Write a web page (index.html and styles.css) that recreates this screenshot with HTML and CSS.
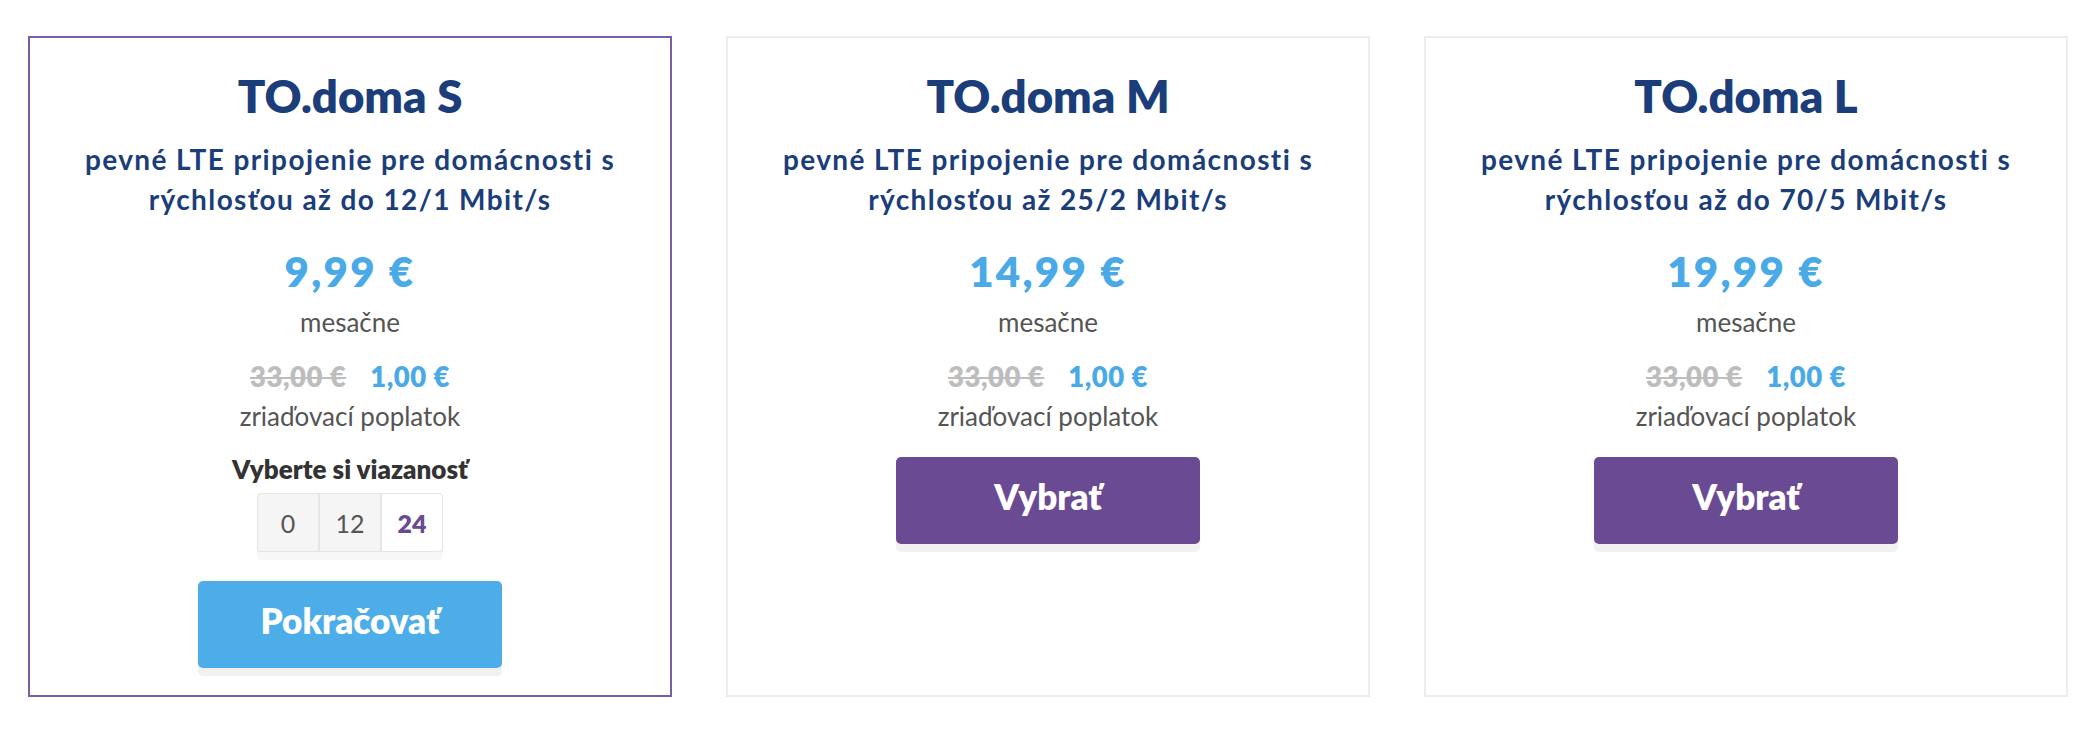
FILE: index.html
```html
<!DOCTYPE html>
<html lang="sk">
<head>
<meta charset="utf-8">
<title>TO.doma</title>
<link rel="stylesheet" href="styles.css">
</head>
<body>
<div class="plans">
  <div class="card card--active">
    <h2 class="title">TO.doma S</h2>
    <p class="subtitle">pevné LTE pripojenie pre domácnosti s<br>rýchlosťou až do 12/1 Mbit/s</p>
    <div class="price">9,99 €</div>
    <div class="label">mesačne</div>
    <div class="fee"><span class="old">33,00 €</span><span class="new">1,00 €</span></div>
    <div class="label">zriaďovací poplatok</div>
    <div class="commit-title">Vyberte si viazanosť</div>
    <div class="segments">
      <span class="seg">0</span>
      <span class="seg">12</span>
      <span class="seg seg--on">24</span>
    </div>
    <button class="btn btn--blue btn--continue">Pokračovať</button>
  </div>
  <div class="card">
    <h2 class="title">TO.doma M</h2>
    <p class="subtitle">pevné LTE pripojenie pre domácnosti s<br>rýchlosťou až 25/2 Mbit/s</p>
    <div class="price">14,99 €</div>
    <div class="label">mesačne</div>
    <div class="fee"><span class="old">33,00 €</span><span class="new">1,00 €</span></div>
    <div class="label">zriaďovací poplatok</div>
    <button class="btn btn--purple">Vybrať</button>
  </div>
  <div class="card">
    <h2 class="title">TO.doma L</h2>
    <p class="subtitle">pevné LTE pripojenie pre domácnosti s<br>rýchlosťou až do 70/5 Mbit/s</p>
    <div class="price">19,99 €</div>
    <div class="label">mesačne</div>
    <div class="fee"><span class="old">33,00 €</span><span class="new">1,00 €</span></div>
    <div class="label">zriaďovací poplatok</div>
    <button class="btn btn--purple">Vybrať</button>
  </div>
</div>
</body>
</html>
```
FILE: styles.css
```css
* { box-sizing: border-box; }
html, body {
  margin: 0;
  padding: 0;
  background: #ffffff;
}
body {
  font-family: Lato, "Open Sans", "Liberation Sans", sans-serif;
  color: #555555;
}
.plans {
  display: flex;
  align-items: stretch;
  gap: 54px;
  padding: 36px 26px 0 28px;
}
.card {
  width: 644px;
  flex: 0 0 644px;
  border: 2px solid #ececec;
  background: #fff;
  padding: 31px 10px 27px;
  display: flex;
  flex-direction: column;
  align-items: center;
  text-align: center;
  box-shadow: 0 7px 0 #f8f8f8;
}
.card--active {
  border-color: #7a5ca8;
}
.title {
  margin: 0;
  font-size: 45.5px;
  line-height: 54px;
  font-weight: 800;
  color: #1b3e7b;
}
.subtitle {
  margin: 16px 0 0;
  font-size: 28px;
  line-height: 40px;
  font-weight: 700;
  letter-spacing: 1.4px;
  color: #1b3e7b;
}
.price {
  margin-top: 28px;
  font-size: 42px;
  line-height: 48px;
  font-weight: 800;
  letter-spacing: 2.3px;
  color: #4aaae7;
}
.label {
  margin-top: 9px;
  font-size: 26px;
  line-height: 36px;
  color: #555555;
}
.fee {
  margin-top: 18.5px;
  font-size: 27.5px;
  line-height: 36px;
  font-weight: 800;
  letter-spacing: 0.5px;
  display: flex;
  gap: 24px;
  justify-content: center;
}
.fee + .label { margin-top: 3.5px; }
.old {
  color: #bdbdbd;
  text-decoration: line-through;
  text-decoration-thickness: 2px;
}
.new { color: #4aaae7; }
.commit-title {
  margin-top: 19px;
  font-size: 26px;
  line-height: 32px;
  font-weight: 800;
  color: #333333;
}
.segments {
  margin-top: 8px;
  display: flex;
  gap: 2px;
  padding: 1px;
  background: #e6e6e6;
  border-radius: 4px;
  box-shadow: 0 8px 0 #f7f7f7;
}
.seg {
  width: 60px;
  height: 57px;
  display: flex;
  align-items: center;
  justify-content: center;
  background: #f5f5f5;
  font-size: 25px;
  color: #555555;
}
.seg:first-child { border-radius: 3px 0 0 3px; }
.seg--on {
  background: #ffffff;
  color: #6b4a94;
  font-weight: 800;
  border-radius: 0 3px 3px 0;
}
.btn {
  margin-top: 23px;
  width: 304px;
  height: 87px;
  border: 0;
  border-radius: 5px;
  font-family: Lato, "Open Sans", "Liberation Sans", sans-serif;
  font-size: 35px;
  font-weight: 800;
  color: #ffffff;
  cursor: pointer;
  box-shadow: 0 8px 0 #f1f1f1;
  padding: 0 0 9px;
}
.btn--continue { margin-top: 29px; }
.btn--blue { background: #4dade8; }
.btn--purple { background: #6b4a94; }
```
